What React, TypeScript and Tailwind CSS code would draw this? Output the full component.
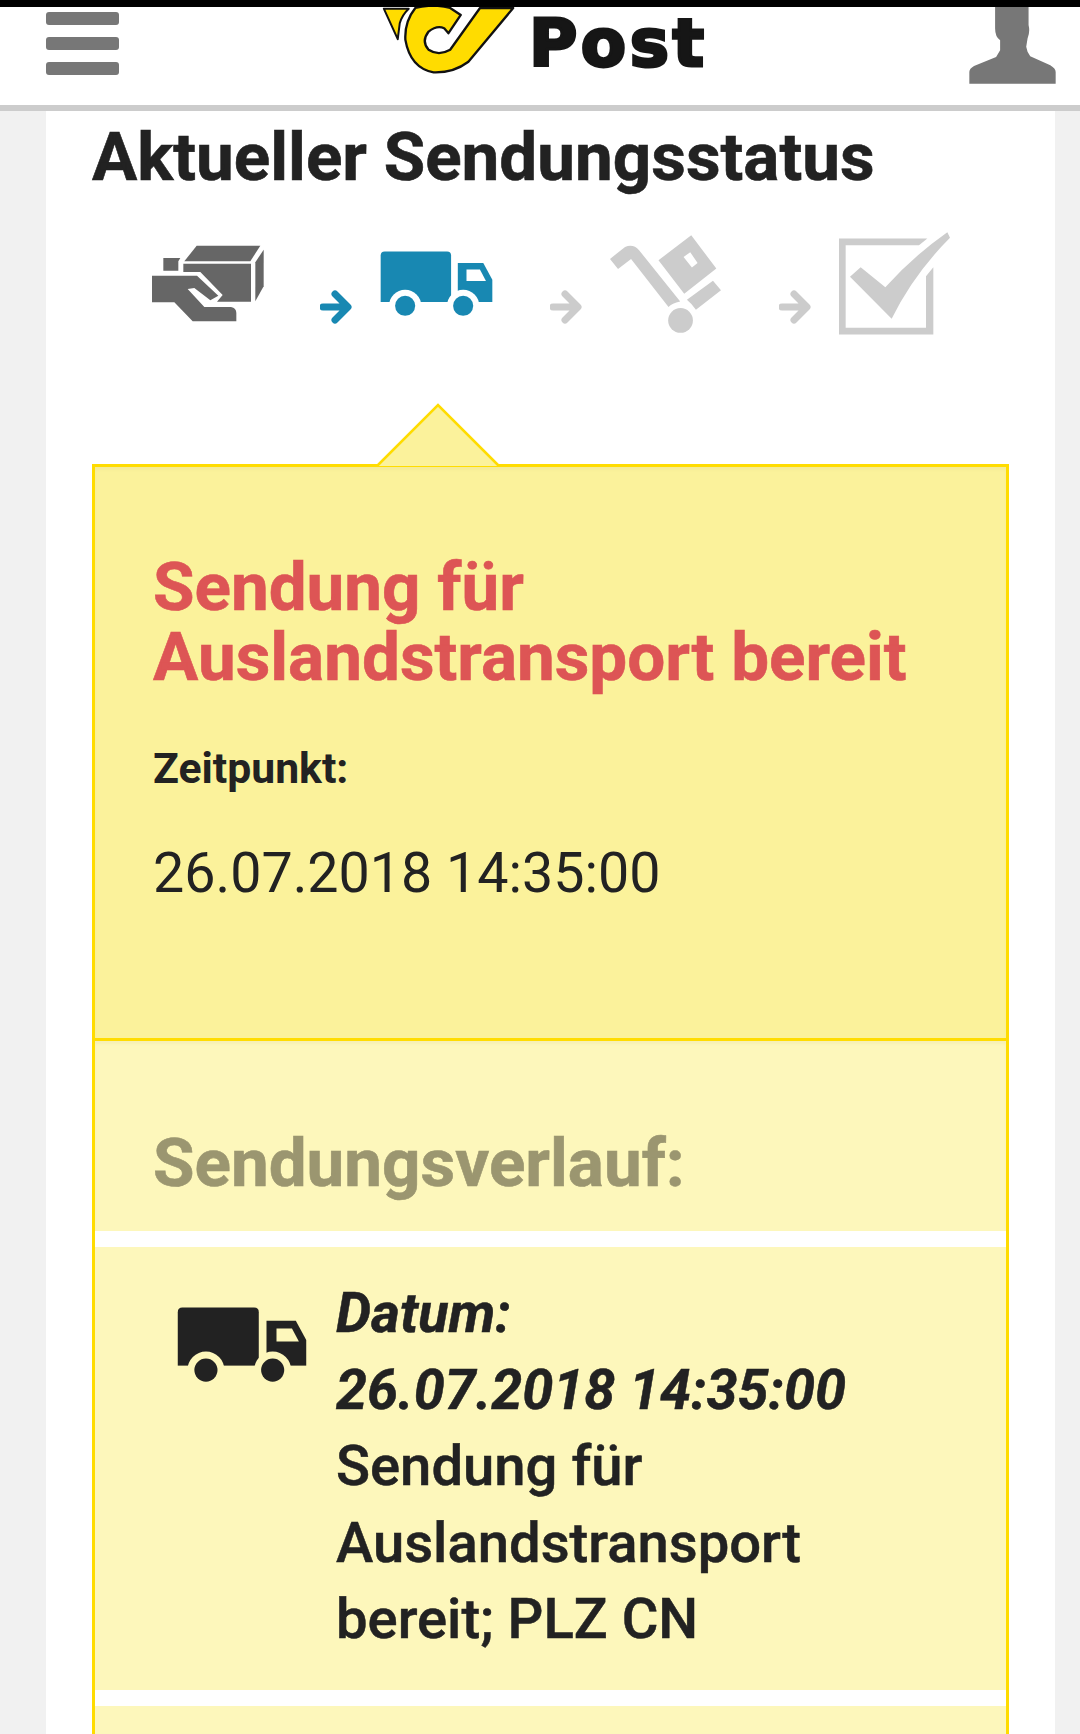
const roboto = "font-['Roboto','Liberation_Sans',sans-serif]";

function Arrow({ color }: { color: string }) {
  return (
    <svg viewBox="0 0 32 34" className="w-8 h-[34px]">
      <path d="M3 17H27M15 4L28 17L15 30" fill="none" stroke={color} strokeWidth="7" strokeLinecap="round" strokeLinejoin="round" />
    </svg>
  );
}

function Truck({ color, bg, className }: { color: string; bg: string; className: string }) {
  return (
    <svg viewBox="750 95 337 196" className={className}>
      <path d="M752 108q0-12 12-12h186q12 0 12 12v139H752Z" fill={color} />
      <path d="M982 130H1058L1085 180V247H982Z" fill={color} />
      <path d="M1008 150H1048L1066 184H1008Z" fill={bg} />
      <circle cx="825" cy="258" r="48" fill={bg} />
      <circle cx="998" cy="258" r="48" fill={bg} />
      <rect x="750" y="247" width="337" height="44" fill={bg} />
      <circle cx="825" cy="258" r="30" fill={color} />
      <circle cx="998" cy="258" r="30" fill={color} />
    </svg>
  );
}

function PostLogo() {
  return (
    <svg viewBox="30 21 410 205" className="w-[137px] h-[68px]">
      <path d="M40 26H115Q95 45 88 70L82 118Z" fill="#ffdc00" stroke="#111" strokeWidth="6" strokeLinejoin="round" />
      <path
        d="M430 24L295 186Q250 220 190 218Q120 205 105 120Q102 65 135 24Q190 10 240 24L272 45L235 100L222 85Q200 75 175 95Q152 125 175 150Q205 170 240 150L330 24Z"
        fill="#ffdc00"
        stroke="#111"
        strokeWidth="7"
        strokeLinejoin="round"
      />
    </svg>
  );
}

function Header() {
  return (
    <header className="bg-white border-b-[6px] border-[#ccc] h-[104px] pl-[46px] pr-6 flex overflow-hidden">
      <div className="w-[73px] pt-[5px] flex flex-col gap-3">
        <div className="h-[13px] rounded-[3px] bg-[#777]" />
        <div className="h-[13px] rounded-[3px] bg-[#777]" />
        <div className="h-[13px] rounded-[3px] bg-[#777]" />
      </div>
      <div className="flex items-start ml-[261px]">
        <PostLogo />
        <span className="ml-[12px] font-['DejaVu_Sans',sans-serif] font-bold text-[66px] leading-[74px] tracking-[3.5px] text-[#161616] [-webkit-text-stroke:3px_#161616]">Post</span>
      </div>
      <svg viewBox="57 21 260 230" className="w-[87px] h-[77px] ml-auto">
        <path
          d="M135 21H235V75Q240 95 232 115L228 140L232 155L240 168L300 195Q316 205 316 215V250H58V215Q58 205 72 197L138 170L150 150V120Q135 110 135 85Z"
          fill="#777"
        />
      </svg>
    </header>
  );
}

function Stepper() {
  return (
    <div className="flex items-start h-[271px] pl-[59px] pt-[48px]">
      <svg viewBox="60 70 345 240" className="w-[115px] h-[80px] mt-[2px]">
        <path d="M160 125L197 78H388L358 125Z" fill="#666" />
        <path d="M373 128L398 90V200L373 245Z" fill="#666" />
        <path d="M157 132H360V246H258L275 226L208 157H157Z" fill="#666" />
        <path d="M97 115H148L142 125V153H97Z" fill="#666" />
        <path d="M63 168H198L262 228L238 242L190 205L170 208L220 262H300Q316 265 316 280V305H185L130 248H63Z" fill="#666" />
      </svg>
      <div className="ml-[54px] mt-[49px]"><Arrow color="#1888b2" /></div>
      <Truck color="#1888b2" bg="#fff" className="w-[113px] h-[66px] ml-[28px] mt-[10px]" />
      <div className="ml-[57px] mt-[49px]"><Arrow color="#ccc" /></div>
      <svg viewBox="240 47 332 292" className="w-[111px] h-[98px] ml-[28px] mt-[-6px]">
        <path d="M240 118L285 82Q310 72 327 92L450 245Q425 250 415 262L303 118L264 148Z" fill="#ccc" />
        <path d="M385 122L483 47L558 147L462 222ZM460 112L485 144L502 130L480 98Z" fill="#ccc" fillRule="evenodd" />
        <path d="M470 240L548 183L572 212L497 270Q485 252 470 240Z" fill="#ccc" />
        <circle cx="451" cy="302" r="37" fill="#ccc" />
      </svg>
      <div className="ml-[58px] mt-[49px]"><Arrow color="#ccc" /></div>
      <svg viewBox="927 38 333 308" className="w-[111px] h-[103px] ml-[28px] mt-[-9px]">
        <path d="M927 57H1192L1167 77H947V325H1188V170L1210 143V345H927Z" fill="#ccc" />
        <path d="M960 172L992 143L1066 203Q1150 110 1252 38L1260 55Q1150 165 1085 298Z" fill="#ccc" />
      </svg>
    </div>
  );
}

function HistoryRow() {
  return (
    <div className="flex bg-[#fdf7bb] h-[443px] pt-[28px]">
      <Truck color="#222" bg="#fdf7bb" className="w-[130px] h-[76px] ml-[82px] mt-[32px]" />
      <div className="ml-[29px] text-[56.2px] leading-[76.5px] font-medium text-[#222] [-webkit-text-stroke:0.5px_#222]">
        <p className="italic font-bold text-[55.7px]">Datum:</p>
        <p className="italic font-bold text-[55.7px]">26.07.2018 14:35:00</p>
        <p>Sendung für</p>
        <p>Auslandstransport</p>
        <p>bereit; PLZ CN</p>
      </div>
    </div>
  );
}

export default function App() {
  return (
    <div className={`${roboto} h-[1734px] overflow-hidden bg-[#f1f1f1]`}>
      <div className="h-[7px] bg-black" />
      <Header />
      <main className="mx-[46px] w-[1009px] bg-white px-[46px] h-[1623px]">
        <h1 className="text-[67.4px] leading-[72px] pt-[10px] box-content font-bold text-[#222] [-webkit-text-stroke:0.6px_#222]">Aktueller Sendungsstatus</h1>
        <Stepper />
        <section className="relative border-[3px] border-[#ffdc00] w-[917px]">
          <svg viewBox="0 0 124 64" className="absolute left-[281px] top-[-64px] w-[124px] h-16">
            <path d="M1 63L62 2L123 63" fill="#fbf29b" stroke="#ffdc00" strokeWidth="2.5" />
          </svg>
          <div className="bg-[#fbf29b] h-[574px] px-[58px] pt-[85px] border-b-[3px] border-[#ffdc00] shadow-[inset_0_3px_3px_rgba(0,0,0,0.03)]">
            <h2 className="text-[67.4px] leading-[70px] font-bold text-[#dd5555] [-webkit-text-stroke:0.6px_#dd5555]">
              Sendung für
              <br />
              Auslandstransport bereit
            </h2>
            <p className="text-[42.7px] leading-[48px] font-bold text-[#222] mt-[52px]">Zeitpunkt:</p>
            <p className="text-[55.6px] leading-[64px] text-[#222] mt-[49px]">26.07.2018 14:35:00</p>
          </div>
          <div className="bg-[#fdf7bb] h-[190px] px-[58px] pt-[86px] shadow-[inset_0_3px_3px_rgba(0,0,0,0.03)]">
            <h3 className="text-[67.4px] leading-[72px] font-bold text-[#9b9670] [-webkit-text-stroke:0.6px_#9b9670]">Sendungsverlauf:</h3>
          </div>
          <div className="h-4 bg-white" />
          <HistoryRow />
          <div className="h-4 bg-white" />
          <div className="h-[80px] bg-[#fdf7bb]" />
        </section>
      </main>
    </div>
  );
}
